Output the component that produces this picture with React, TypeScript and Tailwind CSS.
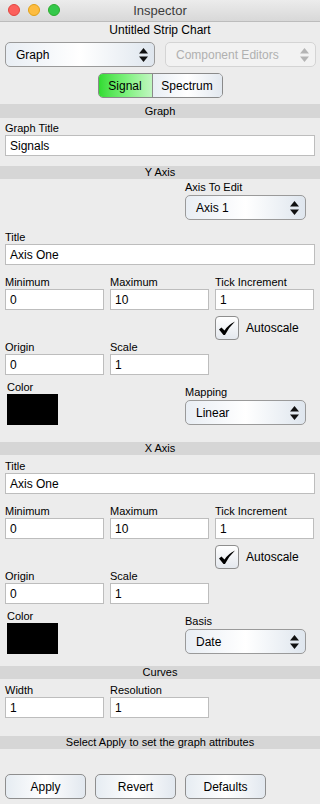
import React from "react";

const font = { fontFamily: '"Liberation Sans", Arial, sans-serif' };

function Arrows({ muted = false }: { muted?: boolean }) {
  const c = muted ? "#b4b4b4" : "#111";
  return (
    <svg width="9" height="14" viewBox="0 0 9 14">
      <path d="M0 5.5 L4.5 0 L9 5.5 Z" fill={c} />
      <path d="M0 8.5 L9 8.5 L4.5 14 Z" fill={c} />
    </svg>
  );
}

function Popup({ label, className = "", muted = false }: { label: string; className?: string; muted?: boolean }) {
  return (
    <div
      className={
        "flex h-[25px] items-center justify-between rounded-[5px] border pl-[10px] pr-[6px] text-[12px] " +
        (muted
          ? "border-[#d4d4d4] bg-[#f2f2f2] text-[#b0b0b0] "
          : "border-[#9a9a9a] bg-gradient-to-r from-[#e9eef4] via-[#ffffff] to-[#dfe6ee] text-black ") +
        className
      }
    >
      <span>{label}</span>
      <Arrows muted={muted} />
    </div>
  );
}

function Band({ text, tall = false }: { text: string; tall?: boolean }) {
  return (
    <div
      className={
        "flex items-center justify-center bg-[#d6d6d6] text-[11px] leading-none text-black " +
        (tall ? "h-[14px]" : "h-[13px]")
      }
    >
      {text}
    </div>
  );
}

function Label({ text, className = "" }: { text: string; className?: string }) {
  return <div className={"h-[14px] text-[11px] leading-[14px] text-black " + className}>{text}</div>;
}

function Field({ value }: { value: string }) {
  return (
    <div className="flex h-[21px] items-center border border-[#bdbdbd] bg-white pl-[4px] text-[12px] text-black">
      {value}
    </div>
  );
}

function Check() {
  return (
    <div className="flex h-[24px] items-center gap-[7px] pl-[215px]">
      <div className="flex h-[24px] w-[24px] items-center justify-center rounded-[4px] border border-[#8e8e8e] bg-gradient-to-b from-[#ffffff] to-[#e4e8ee]">
        <svg width="18" height="15" viewBox="0 0 18 15">
          <path d="M1 8.5 L3.5 6.5 L6.5 9.5 Q10.5 3.5 17 0.5 Q11 6 7 14 L5.5 14 Z" fill="#000" />
        </svg>
      </div>
      <span className="text-[12px] text-black">Autoscale</span>
    </div>
  );
}

function Triple({ items }: { items: [string, string][] }) {
  return (
    <div className="flex gap-x-[6px] px-[5px]">
      {items.map(([l, v]) => (
        <div key={l} className="w-[99px]">
          <Label text={l} />
          <Field value={v} />
        </div>
      ))}
    </div>
  );
}

function AxisBlock({ popLabel, popValue }: { popLabel: string; popValue: string }) {
  return (
    <>
      <div className="mt-[10px]">
        <Triple items={[["Minimum", "0"], ["Maximum", "10"], ["Tick Increment", "1"]]} />
      </div>
      <div className="mt-[6px]">
        <Check />
      </div>
      <Triple items={[["Origin", "0"], ["Scale", "1"]]} />
      <div className="mt-[5px] flex items-end px-[7px]">
        <div className="w-[178px]">
          <Label text="Color" />
          <div className="h-[31px] w-[51px] bg-black" />
        </div>
        <div>
          <Label text={popLabel} />
          <Popup label={popValue} className="mt-[1px] w-[121px]" />
        </div>
      </div>
    </>
  );
}

export default function App() {
  return (
    <div style={font} className="flex h-[804px] w-[320px] flex-col overflow-hidden bg-[#ececec] text-black">
      {/* title bar */}
      <div className="relative flex h-[22px] shrink-0 items-center justify-center border-b border-[#bcbcbc] bg-gradient-to-b from-[#ececec] to-[#d8d8d8]">
        <div className="absolute left-[8px] top-[4px] flex gap-[8px]">
          <span className="h-[12px] w-[12px] rounded-full border border-[#e2463f] bg-[#fc605c]" />
          <span className="h-[12px] w-[12px] rounded-full border border-[#e1a116] bg-[#fdbc40]" />
          <span className="h-[12px] w-[12px] rounded-full border border-[#2dac2f] bg-[#34c84a]" />
        </div>
        <span className="text-[13px] text-[#3c3c3c]">Inspector</span>
      </div>

      <div className="flex h-[16px] items-center justify-center text-[12px]">Untitled Strip Chart</div>

      <div className="mt-[4px] flex justify-between pl-[5px] pr-[4px]">
        <Popup label="Graph" className="w-[150px]" />
        <Popup label="Component Editors" className="w-[151px]" muted />
      </div>

      <div className="mt-[6px] flex justify-center">
        <div className="flex h-[25px] w-[125px] overflow-hidden rounded-[5px] border border-[#8a8a8a] text-[12px]">
          <div className="flex w-[54px] items-center justify-center border-r border-[#8a8a8a] bg-gradient-to-r from-[#2fdc2f] via-[#7af07a] to-[#c0f6c0]">
            Signal
          </div>
          <div className="flex flex-1 items-center justify-center bg-gradient-to-r from-[#e8eef4] via-[#ffffff] to-[#e2e8ef]">
            Spectrum
          </div>
        </div>
      </div>

      <div className="mt-[6px]">
        <Band text="Graph" tall />
      </div>
      <div className="mt-[3px] px-[5px]">
        <Label text="Graph Title" />
        <Field value="Signals" />
      </div>

      <div className="mt-[10px]">
        <Band text="Y Axis" />
      </div>
      <div className="mt-[1px] pl-[185px]">
        <Label text="Axis To Edit" />
        <Popup label="Axis 1" className="mt-[1px] w-[121px]" />
      </div>
      <div className="mt-[10px] px-[5px]">
        <Label text="Title" />
        <Field value="Axis One" />
      </div>
      <AxisBlock popLabel="Mapping" popValue="Linear" />

      <div className="mt-[17px]">
        <Band text="X Axis" />
      </div>
      <div className="mt-[4px] px-[5px]">
        <Label text="Title" />
        <Field value="Axis One" />
      </div>
      <AxisBlock popLabel="Basis" popValue="Date" />

      <div className="mt-[12px]">
        <Band text="Curves" />
      </div>
      <div className="mt-[4px]">
        <Triple items={[["Width", "1"], ["Resolution", "1"]]} />
      </div>

      <div className="mt-[18px]">
        <Band text="Select Apply to set the graph attributes" />
      </div>

      <div className="mt-[25px] flex gap-[9px] px-[5px]">
        {["Apply", "Revert", "Defaults"].map((b) => (
          <div
            key={b}
            className="flex h-[25px] w-[81px] items-center justify-center rounded-[5px] border border-[#8e8e8e] bg-gradient-to-r from-[#e6ecf2] via-[#ffffff] to-[#e2e8ef] text-[12px]"
          >
            {b}
          </div>
        ))}
      </div>
    </div>
  );
}
